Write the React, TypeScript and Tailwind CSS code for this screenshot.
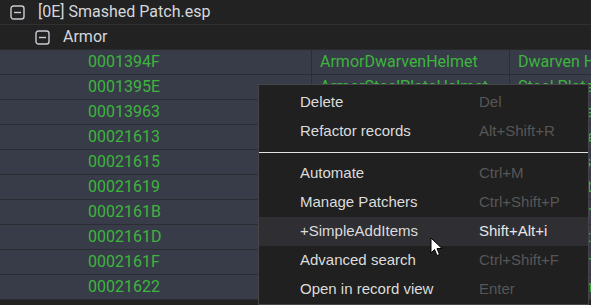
import React from "react";

const records = [
  { id: "0001394F", edid: "ArmorDwarvenHelmet", name: "Dwarven Helmet" },
  { id: "0001395E", edid: "ArmorSteelPlateHelmet", name: "Steel Plate Helmet" },
  { id: "00013963", edid: "ArmorSteelPlateBoots", name: "Steel Plate Boots" },
  { id: "00021613", edid: "ArmorIronHelmet", name: "Iron Helmet" },
  { id: "00021615", edid: "ArmorIronBoots", name: "Iron Boots" },
  { id: "00021619", edid: "ArmorIronGauntlets", name: "Iron Gauntlets" },
  { id: "0002161B", edid: "ArmorSteelHelmet", name: "Steel Helmet" },
  { id: "0002161D", edid: "ArmorSteelBoots", name: "Steel Boots" },
  { id: "0002161F", edid: "ArmorSteelGauntlets", name: "Steel Gauntlets" },
  { id: "00021622", edid: "ArmorElvenHelmet", name: "Elven Helmet" },
];

const menuTop = [
  { label: "Delete", key: "Del" },
  { label: "Refactor records", key: "Alt+Shift+R" },
];

const menuBottom = [
  { label: "Automate", key: "Ctrl+M" },
  { label: "Manage Patchers", key: "Ctrl+Shift+P" },
  { label: "+SimpleAddItems", key: "Shift+Alt+i", active: true },
  { label: "Advanced search", key: "Ctrl+Shift+F" },
  { label: "Open in record view", key: "Enter" },
];

function Collapse() {
  return (
    <svg width="15" height="15" viewBox="0 0 15 15" className="shrink-0">
      <rect x="1" y="1" width="13" height="13" rx="2.5" fill="none" stroke="#c9ccd4" strokeWidth="1.4" />
      <line x1="4" y1="7.5" x2="11" y2="7.5" stroke="#c9ccd4" strokeWidth="1.4" />
    </svg>
  );
}

function MenuItem({ label, shortcut, active }: { label: string; shortcut: string; active?: boolean }) {
  return (
    <div className={`flex h-[29px] items-center ${active ? "bg-[#2e2e33]" : ""}`}>
      <span className="w-[220px] shrink-0 pl-[41px] text-[#dcdcdc]">{label}</span>
      <span className={active ? "text-[#e6e6e6]" : "text-[#575757]"}>{shortcut}</span>
    </div>
  );
}

export default function App() {
  return (
    <div className="relative h-[305px] w-[591px] overflow-hidden bg-[#222222] font-['Roboto',sans-serif] text-[16px]">
      <div className="flex h-[25px] items-center border-b border-[#303030] pl-[10px] text-[#d5d7dc]">
        <Collapse />
        <span className="ml-[13px]">[0E] Smashed Patch.esp</span>
      </div>
      <div className="flex h-[25px] items-center border-b border-[#2a2a2a] pl-[35px] text-[#d5d7dc]">
        <Collapse />
        <span className="ml-[13px]">Armor</span>
      </div>
      {records.map((r) => (
        <div key={r.id} className="flex h-[25px] border-b border-[#2b2d33] bg-[#383c49] text-[#3db53d]">
          <div className="flex w-[312px] items-center border-r border-[#2b2e37] pl-[88px]">{r.id}</div>
          <div className="flex w-[198px] items-center overflow-hidden whitespace-nowrap border-r border-[#2b2e37] pl-[8px]">
            {r.edid}
          </div>
          <div className="flex flex-1 items-center overflow-hidden whitespace-nowrap pl-[8px]">{r.name}</div>
        </div>
      ))}

      <div className="absolute left-[258px] top-[84px] w-[331px] border border-[#454545] bg-[#202020] pt-[3px] font-['Liberation_Sans',Arial,sans-serif] text-[15px]">
        {menuTop.map((m) => (
          <MenuItem key={m.label} label={m.label} shortcut={m.key} />
        ))}
        <div className="my-[6px] h-[1px] bg-[#e2e2e2]" />
        {menuBottom.map((m) => (
          <MenuItem key={m.label} label={m.label} shortcut={m.key} active={m.active} />
        ))}
      </div>

      <svg className="absolute left-[430px] top-[237px]" width="14" height="21" viewBox="0 0 14 21">
        <path d="M1 1 L1 16 L4.5 12.5 L7 18.5 L9.5 17.5 L7 11.5 L12 11.5 Z" fill="#ffffff" stroke="#000000" strokeWidth="1" strokeLinejoin="round" />
      </svg>
    </div>
  );
}
